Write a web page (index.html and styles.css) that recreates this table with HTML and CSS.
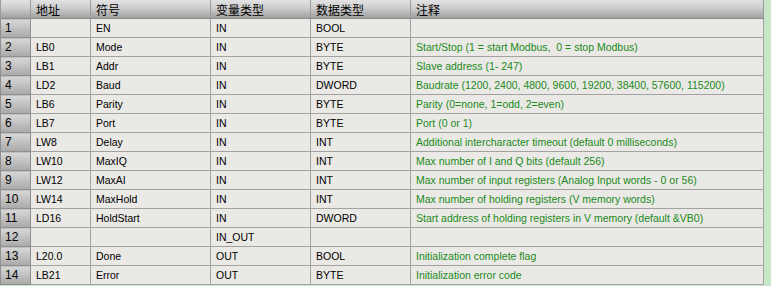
FILE: index.html
```html
<!DOCTYPE html>
<html lang="zh">
<head>
<meta charset="utf-8">
<link rel="stylesheet" href="styles.css">
</head>
<body>
<table class="grid">
  <colgroup>
    <col class="c-num"><col class="c-addr"><col class="c-sym"><col class="c-var"><col class="c-data"><col class="c-note">
  </colgroup>
  <thead>
    <tr><th class="num"></th><th>地址</th><th>符号</th><th>变量类型</th><th>数据类型</th><th>注释</th></tr>
  </thead>
  <tbody>
    <tr><td class="num">1</td><td></td><td>EN</td><td>IN</td><td>BOOL</td><td class="note"></td></tr>
    <tr><td class="num">2</td><td>LB0</td><td>Mode</td><td>IN</td><td>BYTE</td><td class="note">Start/Stop (1 = start Modbus,&nbsp; 0 = stop Modbus)</td></tr>
    <tr><td class="num">3</td><td>LB1</td><td>Addr</td><td>IN</td><td>BYTE</td><td class="note">Slave address (1- 247)</td></tr>
    <tr><td class="num">4</td><td>LD2</td><td>Baud</td><td>IN</td><td>DWORD</td><td class="note">Baudrate (1200, 2400, 4800, 9600, 19200, 38400, 57600, 115200)</td></tr>
    <tr><td class="num">5</td><td>LB6</td><td>Parity</td><td>IN</td><td>BYTE</td><td class="note">Parity (0=none, 1=odd, 2=even)</td></tr>
    <tr><td class="num">6</td><td>LB7</td><td>Port</td><td>IN</td><td>BYTE</td><td class="note">Port (0 or 1)</td></tr>
    <tr><td class="num">7</td><td>LW8</td><td>Delay</td><td>IN</td><td>INT</td><td class="note">Additional intercharacter timeout (default 0 milliseconds)</td></tr>
    <tr><td class="num">8</td><td>LW10</td><td>MaxIQ</td><td>IN</td><td>INT</td><td class="note">Max number of I and Q bits (default 256)</td></tr>
    <tr><td class="num">9</td><td>LW12</td><td>MaxAI</td><td>IN</td><td>INT</td><td class="note">Max number of input registers (Analog Input words - 0 or 56)</td></tr>
    <tr><td class="num">10</td><td>LW14</td><td>MaxHold</td><td>IN</td><td>INT</td><td class="note">Max number of holding registers (V memory words)</td></tr>
    <tr><td class="num">11</td><td>LD16</td><td>HoldStart</td><td>IN</td><td>DWORD</td><td class="note">Start address of holding registers in V memory (default &amp;VB0)</td></tr>
    <tr><td class="num">12</td><td></td><td></td><td>IN_OUT</td><td></td><td class="note"></td></tr>
    <tr><td class="num">13</td><td>L20.0</td><td>Done</td><td>OUT</td><td>BOOL</td><td class="note">Initialization complete flag</td></tr>
    <tr><td class="num">14</td><td>LB21</td><td>Error</td><td>OUT</td><td>BYTE</td><td class="note">Initialization error code</td></tr>
  </tbody>
</table>
</body>
</html>
```

FILE: styles.css
```css
html, body {
  margin: 0;
  padding: 0;
  background: #c8e6c8;
  overflow: hidden;
}
.grid {
  border-collapse: collapse;
  table-layout: fixed;
  width: 763px;
  font-family: "Liberation Sans", "Noto Sans CJK SC", sans-serif;
  font-size: 10.5px;
  color: #000;
  background: #ebe9e6;
}
.c-num { width: 30px; }
.c-addr { width: 60px; }
.c-sym { width: 120px; }
.c-var { width: 100px; }
.c-data { width: 100px; }
.c-note { width: 353px; }
.grid th, .grid td {
  height: 18px;
  padding: 0 0 0 5px;
  border: 1px solid #a2a2a2;
  border-top: none;
  white-space: nowrap;
  overflow: hidden;
  text-align: left;
  vertical-align: middle;
}
.grid th {
  font-family: "Noto Sans CJK SC", sans-serif;
  font-weight: normal;
  font-size: 12px;
  background: linear-gradient(#e2e2e2 0%, #cdcdcd 45%, #a0a0a0 100%);
  border-color: #9a9a9a;
  border-bottom: 1px solid #8e8e8e;
}
.grid td.num {
  background: linear-gradient(#d8d8d8, #a9a9a9);
  border-color: #8f8f8f;
  padding-left: 4px;
  font-size: 12px;
}
.grid td.note {
  color: #1a8a1a;
}
```
